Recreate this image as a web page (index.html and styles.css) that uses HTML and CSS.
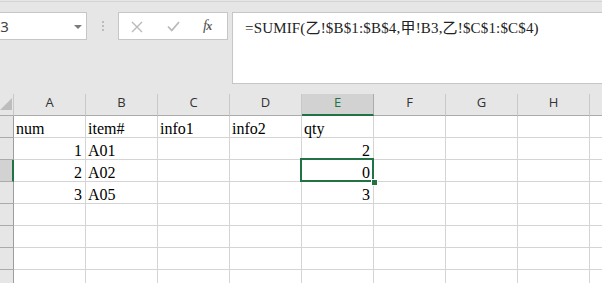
FILE: index.html
```html
<!DOCTYPE html>
<html lang="zh-Hant">
<head>
    <meta charset="UTF-8">
    <meta name="viewport" content="width=device-width, initial-scale=1.0">
    <title>Sheet</title>
    <link rel="stylesheet" href="styles.css">
</head>
<body>
    <div class="toolbar">
        <div class="namebox">
            <span class="name">E3</span>
            <svg class="drop" width="8" height="4" viewBox="0 0 8 4"><polygon points="0,0 8,0 4,4" fill="#7a7a7a"/></svg>
        </div>
        <div class="grip"><i></i><i></i><i></i></div>
        <div class="buttons">
            <svg class="btn cancel" width="12" height="12" viewBox="0 0 12 12"><path d="M1 1 L11 11 M11 1 L1 11" stroke="#b9b9b9" stroke-width="1.4" fill="none"/></svg>
            <svg class="btn enter" width="13" height="11" viewBox="0 0 13 11"><path d="M1 5.5 L4.8 9.5 L12 1" stroke="#b9b9b9" stroke-width="1.8" fill="none"/></svg>
            <span class="fx">f<span>x</span></span>
        </div>
        <div class="formula">=SUMIF(乙!$B$1:$B$4,甲!B3,乙!$C$1:$C$4)</div>
    </div>

    <div class="sheet">
        <div class="corner"><svg width="14" height="21" viewBox="0 0 14 21"><polygon points="0,16 12,4 12,16" fill="#bdbdbd"/></svg></div>
        <div class="col">A</div>
        <div class="col">B</div>
        <div class="col">C</div>
        <div class="col">D</div>
        <div class="col active">E</div>
        <div class="col">F</div>
        <div class="col">G</div>
        <div class="col">H</div>
        <div class="col">I</div>

        <div class="row"></div>
        <div class="cell">num</div><div class="cell">item#</div><div class="cell">info1</div><div class="cell">info2</div><div class="cell">qty</div><div class="cell"></div><div class="cell"></div><div class="cell"></div><div class="cell"></div>

        <div class="row"></div>
        <div class="cell num">1</div><div class="cell">A01</div><div class="cell"></div><div class="cell"></div><div class="cell num">2</div><div class="cell"></div><div class="cell"></div><div class="cell"></div><div class="cell"></div>

        <div class="row active"></div>
        <div class="cell num">2</div><div class="cell">A02</div><div class="cell"></div><div class="cell"></div><div class="cell num selected">0<span class="handle"></span></div><div class="cell"></div><div class="cell"></div><div class="cell"></div><div class="cell"></div>

        <div class="row"></div>
        <div class="cell num">3</div><div class="cell">A05</div><div class="cell"></div><div class="cell"></div><div class="cell num">3</div><div class="cell"></div><div class="cell"></div><div class="cell"></div><div class="cell"></div>

        <div class="row"></div>
        <div class="cell"></div><div class="cell"></div><div class="cell"></div><div class="cell"></div><div class="cell"></div><div class="cell"></div><div class="cell"></div><div class="cell"></div><div class="cell"></div>

        <div class="row"></div>
        <div class="cell"></div><div class="cell"></div><div class="cell"></div><div class="cell"></div><div class="cell"></div><div class="cell"></div><div class="cell"></div><div class="cell"></div><div class="cell"></div>

        <div class="row"></div>
        <div class="cell"></div><div class="cell"></div><div class="cell"></div><div class="cell"></div><div class="cell"></div><div class="cell"></div><div class="cell"></div><div class="cell"></div><div class="cell"></div>

        <div class="row"></div>
        <div class="cell"></div><div class="cell"></div><div class="cell"></div><div class="cell"></div><div class="cell"></div><div class="cell"></div><div class="cell"></div><div class="cell"></div><div class="cell"></div>
    </div>
</body>
</html>
```

FILE: styles.css
```css
body { margin: 0; background: #e6e6e6; overflow: hidden; width: 602px; height: 283px; }

/* formula bar */
.toolbar { display: flex; align-items: flex-start; box-sizing: border-box; height: 93px; margin-top: 1px; padding-top: 10px; border-top: 1px solid #d4d4d4; }
.namebox { box-sizing: border-box; width: 99px; height: 28px; margin-left: -12px; display: flex; align-items: center; justify-content: space-between; padding: 0 4px 0 3px; background: #fff; border: 1px solid #c6c6c6; }
.name { font: 15px "Noto Sans", sans-serif; color: #444; line-height: 26px; }
.drop { margin-top: 1px; }
.grip { display: flex; flex-direction: column; gap: 2px; margin: 9px 0 0 15px; }
.grip i { display: block; width: 2px; height: 2px; background: #bcbcbc; }
.buttons { box-sizing: border-box; width: 110px; height: 28px; margin-left: 14px; display: flex; align-items: center; padding-left: 12px; background: #fff; border: 1px solid #c6c6c6; }
.cancel { margin-top: 1px; }
.enter { margin-left: 24px; margin-top: 1px; }
.fx { margin-left: 23px; margin-top: -2px; font: italic 15px "Liberation Serif", serif; color: #555; letter-spacing: -1px; }
.fx span { font-size: 12px; font-weight: bold; }
.formula { box-sizing: border-box; flex: 1; height: 72px; margin: 0 -10px 0 4px; padding: 6px 12px; background: #fff; border: 1px solid #c6c6c6; font: 15px "Liberation Serif", "Noto Sans CJK TC", serif; line-height: 18px; letter-spacing: 0.17px; color: #222; white-space: nowrap; }

/* grid */
.sheet { display: grid; grid-template-columns: 14px repeat(9, 72px); grid-auto-rows: 22px; }
.sheet > div { box-sizing: border-box; }
.corner { background: #e6e6e6; border-right: 1px solid #c8c8c8; border-bottom: 1px solid #ababab; }
.corner svg { display: block; }
.col { background: #e6e6e6; border-right: 1px solid #c8c8c8; border-bottom: 1px solid #ababab; text-align: center; font: 13px "Open Sans", sans-serif; line-height: 16px; color: #333; }
.col.active { background: #d2d2d2; color: #217346; border-bottom: 2px solid #217346; border-right-color: #ababab; }
.row { background: #e6e6e6; border-right: 1px solid #9e9e9e; border-bottom: 1px solid #ababab; }
.row.active { background: #d2d2d2; border-right: 2px solid #217346; }
.cell { background: #fff; border-right: 1px solid #d4d4d4; border-bottom: 1px solid #d4d4d4; padding: 3px 3px 0 2px; font: 16px "Liberation Serif", serif; line-height: 19px; color: #000; white-space: nowrap; overflow: visible; }
.cell.num { text-align: right; }
.cell.selected { position: relative; }
.cell.selected::before { content: ""; position: absolute; left: -2px; top: -2px; right: -1px; bottom: -1px; border: 2px solid #217346; }
.handle { position: absolute; left: 69px; top: 19px; width: 5px; height: 5px; background: #217346; border: 1px solid #fff; }
```
